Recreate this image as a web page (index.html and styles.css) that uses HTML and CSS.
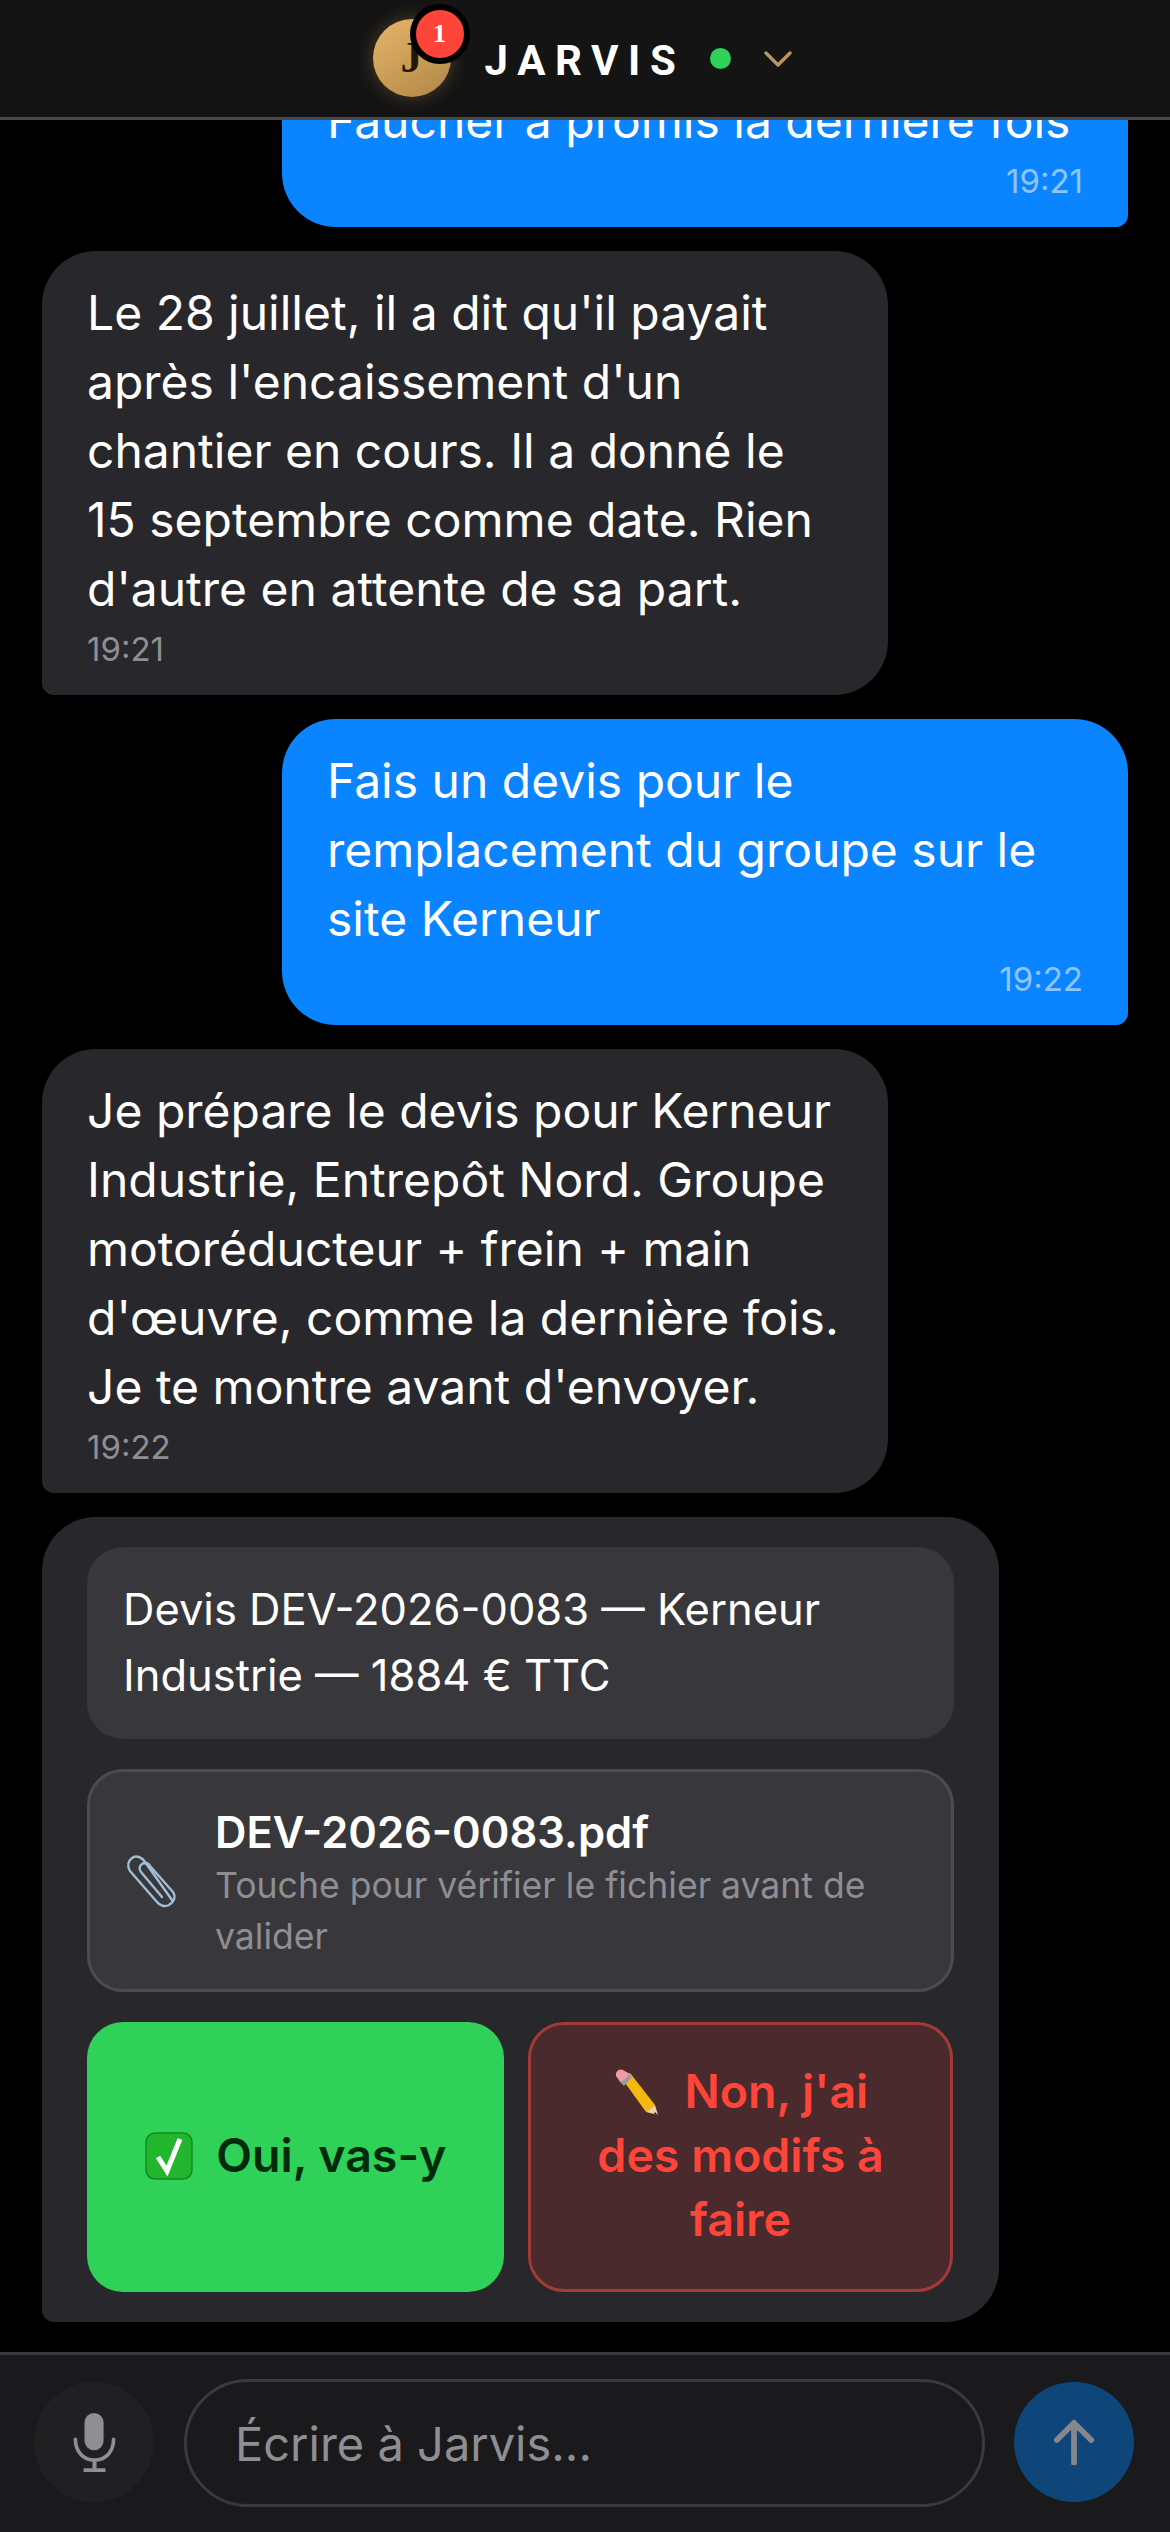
FILE: index.html
```html
<!DOCTYPE html>
<html lang="fr">
  <head>
    <meta charset="utf-8">
    <title>Jarvis</title>
    <link rel="stylesheet" href="styles.css">
  </head>
  <body>
    <div class="app">
      <header class="topbar">
        <div class="avatar">
          J
          <span class="avatar-badge">1</span>
        </div>
        <span class="brand">JARVIS</span>
        <span class="status-dot"></span>
        <svg class="chevron" viewBox="0 0 28 16" fill="none">
          <path d="M2 2l12 12L26 2" stroke="#b8975c" stroke-width="3.4" stroke-linecap="round" stroke-linejoin="round"/>
        </svg>
      </header>

      <main class="messages">
        <div class="message user">
          <div>Rappelle-moi ce que<br>Faucher a promis la dernière fois</div>
          <div class="message-time">19:21</div>
        </div>

        <div class="message assistant">
          <div>Le 28 juillet, il a dit qu'il payait après l'encaissement d'un chantier en cours. Il a donné le 15 septembre comme date. Rien d'autre en attente de sa part.</div>
          <div class="message-time">19:21</div>
        </div>

        <div class="message user">
          <div>Fais un devis pour le remplacement du groupe sur le site Kerneur</div>
          <div class="message-time">19:22</div>
        </div>

        <div class="message assistant">
          <div>Je prépare le devis pour Kerneur Industrie, Entrepôt Nord. Groupe motoréducteur + frein + main d'œuvre, comme la dernière fois. Je te montre avant d'envoyer.</div>
          <div class="message-time">19:22</div>
        </div>

        <!-- Validation card -->
        <div class="approval-card">
          <div class="approval-summary">Devis DEV-2026-0083 — Kerneur Industrie — 1884 € TTC</div>

          <div class="attachment">
            <svg class="attachment-icon" viewBox="0 0 56 54" fill="none">
              <path d="M46 46 19 8C16 3 10 1 6 4 2 7 1 12 4 17l27 31c3 4 8 5 12 3 5-3 7-8 4-13L24 12c-2-3-5-4-8-2s-3 5-1 8l21 25" stroke="#a3bdd4" stroke-width="2.4" stroke-linecap="round" stroke-linejoin="round"/>
            </svg>
            <div class="attachment-text">
              <div class="attachment-name">DEV-2026-0083.pdf</div>
              <div class="attachment-hint">Touche pour vérifier le fichier avant de valider</div>
            </div>
          </div>

          <div class="approval-actions">
            <button class="btn-yes">
              <svg class="emoji" viewBox="0 0 48 48">
                <rect x="1" y="1" width="46" height="46" rx="9" fill="#22b52e"/>
                <rect x="1" y="1" width="46" height="46" rx="9" fill="none" stroke="#148a20" stroke-width="1.5"/>
                <path d="M13 25l9 14L35 7" fill="none" stroke="#fff" stroke-width="5"/>
              </svg>
              Oui, vas-y
            </button>
            <button class="btn-no">
              <svg class="emoji" viewBox="0 0 48 48">
                <path d="M10 12l7-7 25 32-9 7z" fill="#f5b80f"/>
                <path d="M3 8c-1-4 3-8 7-6l7 4-9 9z" fill="#f09aa5"/>
                <path d="M8 15l9-9 2 3-8 9z" fill="#9a9aa0"/>
                <path d="M33 44l9-7 3 10z" fill="#f0d0a0"/>
                <path d="M42 44l3 3-4-1z" fill="#222"/>
              </svg>
              Non, j'ai des modifs à faire
            </button>
          </div>
        </div>
      </main>

      <footer class="composer">
        <button class="mic-btn" title="Dicter">
          <svg viewBox="0 0 48 66" fill="none">
            <rect x="13" y="1" width="21" height="41" rx="10.5" fill="#8e8e93"/>
            <path d="M3 30c0 14 9 23 21 23s21-9 21-23" stroke="#8e8e93" stroke-width="4" stroke-linecap="round"/>
            <path d="M24 53v10M12 64h24" stroke="#8e8e93" stroke-width="4.5"/>
          </svg>
        </button>
        <div class="composer-input">Écrire à Jarvis...</div>
        <button class="send-btn" title="Envoyer">
          <svg viewBox="0 0 44 48" fill="none">
            <path d="M22 46V4M4 22 22 4l18 18" stroke="#84878b" stroke-width="6" stroke-linecap="round" stroke-linejoin="round"/>
          </svg>
        </button>
      </footer>
    </div>
  </body>
</html>
```

FILE: styles.css
```css
body {
  font-family: Inter, "Noto Sans", sans-serif;
  background-color: #000000;
  color: #ffffff;
  margin: 0;
}

.app {
  width: 1170px;
  height: 2532px;
  display: flex;
  flex-direction: column;
  overflow: hidden;
}

/* Top bar */
.topbar {
  flex-shrink: 0;
  height: 117px;
  display: flex;
  align-items: center;
  justify-content: center;
  background-color: #141414;
  border-bottom: 3px solid #48484a;
  padding-right: 5px;
}

.avatar {
  position: relative;
  width: 78px;
  height: 78px;
  border-radius: 50%;
  margin-right: 34px;
  margin-top: -2px;
  display: flex;
  align-items: center;
  justify-content: center;
  background: linear-gradient(145deg, #e6b569, #b08646);
  box-shadow: 0 0 18px rgba(214, 168, 96, 0.3);
  font-family: "Liberation Serif", serif;
  font-weight: 700;
  font-size: 44px;
  color: #241708;
}

.avatar-badge {
  position: absolute;
  top: -15px;
  right: -19px;
  width: 48px;
  height: 48px;
  border: 6px solid #000000;
  border-radius: 50%;
  background-color: #ff453a;
  display: flex;
  align-items: center;
  justify-content: center;
  font-size: 26px;
  color: #ffffff;
}

.brand {
  font-family: Roboto, sans-serif;
  font-size: 42px;
  font-weight: 700;
  letter-spacing: 9.6px;
  margin-right: 25px;
  margin-top: 3px;
}

.status-dot {
  width: 21px;
  height: 21px;
  border-radius: 50%;
  background-color: #30d158;
  margin-right: 33px;
}

.chevron {
  width: 28px;
  height: 16px;
}

/* Messages */
.messages {
  flex: 1;
  min-height: 0;
  display: flex;
  flex-direction: column;
  justify-content: flex-end;
  gap: 24px;
  padding: 0 42px 30px;
  overflow: hidden;
}

.message {
  flex-shrink: 0;
  box-sizing: border-box;
  width: 846px;
  padding: 27px 45px 26px;
  border-radius: 54px;
  font-size: 48px;
  line-height: 69px;
}

.message.user {
  background-color: #0a84ff;
  align-self: flex-end;
  border-bottom-right-radius: 12px;
}

.message.assistant {
  background-color: #28282c;
  border-bottom-left-radius: 12px;
}

.message-time {
  font-size: 33px;
  line-height: 40px;
  margin-top: 6px;
  color: #8e8e93;
}

.message.user .message-time {
  text-align: right;
  color: rgba(255, 255, 255, 0.55);
}

/* Validation card */
.approval-card {
  flex-shrink: 0;
  box-sizing: border-box;
  width: 957px;
  padding: 30px 45px;
  background-color: #28282c;
  border-radius: 54px;
  border-bottom-left-radius: 12px;
  display: flex;
  flex-direction: column;
  gap: 30px;
}

.approval-summary {
  padding: 29px 36px 31px;
  background-color: #38383c;
  border-radius: 36px;
  font-size: 43.5px;
  line-height: 66px;
}

.attachment {
  display: flex;
  align-items: center;
  gap: 33px;
  padding: 33px 36px 27px;
  background-color: #38383c;
  border: 3px solid #4c4c50;
  border-radius: 36px;
}

.attachment-icon {
  flex-shrink: 0;
  width: 56px;
  height: 54px;
  margin-top: -6px;
}

.attachment-name {
  font-size: 43.5px;
  font-weight: 600;
  line-height: 55px;
}

.attachment-hint {
  font-size: 35.6px;
  line-height: 51px;
  color: #8e8e93;
}

.approval-actions {
  display: grid;
  grid-template-columns: 417px 425px;
  gap: 24px;
}

.approval-actions button {
  min-height: 270px;
  padding: 24px 50px 28px;
  border-radius: 36px;
  font-family: inherit;
  font-size: 46.5px;
  font-weight: 600;
  line-height: 64px;
  text-align: center;
}

.approval-actions .btn-yes {
  padding: 24px 20px 28px;
  border: none;
  background-color: #30d158;
  color: #002a0c;
}

.btn-no {
  border: 3px solid #a23a36;
  background-color: #4a2a2d;
  color: #ff453a;
}

.emoji {
  width: 48px;
  height: 48px;
  margin-right: 12px;
  vertical-align: -8px;
}

/* Composer */
.composer {
  flex-shrink: 0;
  height: 180px;
  box-sizing: border-box;
  display: flex;
  align-items: flex-start;
  padding: 24px 36px 0 34px;
  background-color: #1a1a1d;
  border-top: 3px solid #3a3a3c;
}

.mic-btn,
.send-btn {
  flex-shrink: 0;
  width: 120px;
  height: 120px;
  margin-top: 3px;
  padding: 0;
  border: none;
  border-radius: 50%;
  display: flex;
  align-items: center;
  justify-content: center;
}

.mic-btn {
  background-color: #202022;
}

.mic-btn svg {
  width: 45px;
  height: 60px;
}

.send-btn {
  background-color: #0e4679;
}

.send-btn svg {
  width: 42px;
  height: 46px;
}

.composer-input {
  box-sizing: border-box;
  width: 803px;
  height: 128px;
  margin: 0 29px 0 30px;
  padding: 0 48px;
  display: flex;
  align-items: center;
  border: 3px solid #3a3a3c;
  border-radius: 64px;
  font-size: 47px;
  color: #8e8e93;
}
```
